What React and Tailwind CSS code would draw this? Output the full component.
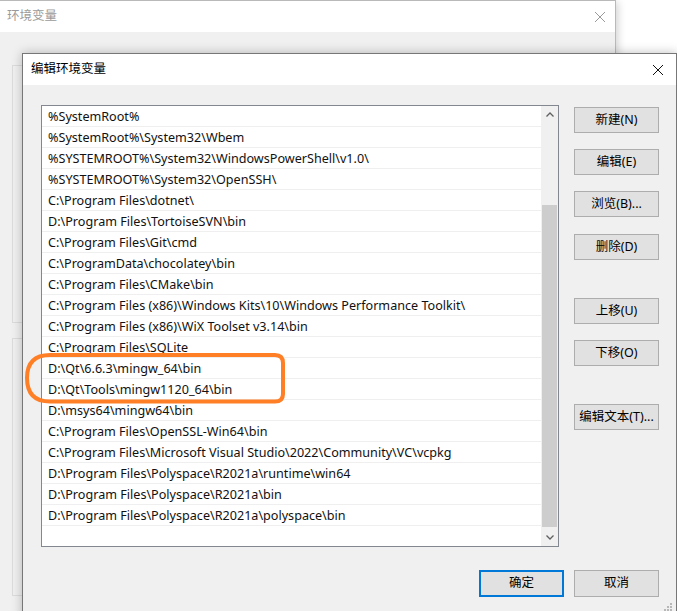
import React from 'react';

const paths = [
  '%SystemRoot%',
  '%SystemRoot%\\System32\\Wbem',
  '%SYSTEMROOT%\\System32\\WindowsPowerShell\\v1.0\\',
  '%SYSTEMROOT%\\System32\\OpenSSH\\',
  'C:\\Program Files\\dotnet\\',
  'D:\\Program Files\\TortoiseSVN\\bin',
  'C:\\Program Files\\Git\\cmd',
  'C:\\ProgramData\\chocolatey\\bin',
  'C:\\Program Files\\CMake\\bin',
  'C:\\Program Files (x86)\\Windows Kits\\10\\Windows Performance Toolkit\\',
  'C:\\Program Files (x86)\\WiX Toolset v3.14\\bin',
  'C:\\Program Files\\SQLite',
  'D:\\Qt\\6.6.3\\mingw_64\\bin',
  'D:\\Qt\\Tools\\mingw1120_64\\bin',
  'D:\\msys64\\mingw64\\bin',
  'C:\\Program Files\\OpenSSL-Win64\\bin',
  'C:\\Program Files\\Microsoft Visual Studio\\2022\\Community\\VC\\vcpkg',
  'D:\\Program Files\\Polyspace\\R2021a\\runtime\\win64',
  'D:\\Program Files\\Polyspace\\R2021a\\bin',
  'D:\\Program Files\\Polyspace\\R2021a\\polyspace\\bin',
];

const CloseIcon = ({ color }) => (
  <svg width="12" height="12" viewBox="0 0 12 12">
    <path d="M1 1 L11 11 M11 1 L1 11" stroke={color} strokeWidth="1" fill="none" />
  </svg>
);

const Btn = ({ children, className = '' }) => (
  <button className={`w-[85px] h-[26px] bg-[#e1e1e1] border border-[#adadad] text-[12.5px] text-black flex items-center justify-center ${className}`}>
    {children}
  </button>
);

const App = () => {
  return (
    <div className="relative w-[677px] h-[611px] overflow-hidden bg-white font-['Noto_Sans','Noto_Sans_CJK_SC',sans-serif] text-[12px] leading-none">
      {/* Background window: 环境变量 */}
      <div className="absolute left-0 top-0 w-[616px] h-[611px] border-t border-r border-[#b9b9b9] bg-[#f0f0f0] shadow-[2px_2px_8px_rgba(0,0,0,0.18)]">
        <div className="h-[31px] bg-white flex items-center justify-between pl-[7px] pr-[9px]">
          <span className="text-[#9a9a9a] text-[12.5px]">环境变量</span>
          <CloseIcon color="#9a9a9a" />
        </div>
        <div className="pl-[12px] pt-[33px] flex flex-col gap-[15px]">
          <div className="h-[258px] border-l border-t border-b border-[#dcdcdc]" />
          <div className="h-[258px] border-l border-t border-b border-[#dcdcdc]" />
        </div>
      </div>

      {/* Dialog: 编辑环境变量 */}
      <div className="absolute left-[22px] top-[53px] w-[655px] h-[580px] border border-[#777777] bg-[#f0f0f0] shadow-[0_0_10px_rgba(0,0,0,0.25)]">
        <div className="h-[31px] bg-white flex items-center justify-between pl-[8px] pr-[12px]">
          <span className="text-black text-[12.5px]">编辑环境变量</span>
          <CloseIcon color="#111" />
        </div>

        <div className="pl-[18px] pr-[17px] pt-[20px]">
          <div className="flex gap-[15px]">
            {/* List box */}
            <div className="relative w-[518px] h-[442px] border border-[#828790] bg-white flex">
              <div className="w-[499px] flex flex-col">
                {paths.map((p) => (
                  <div key={p} className="h-[21px] border-b border-[#efefef] pl-[6px] pt-[2px] flex items-center whitespace-nowrap overflow-hidden text-[12.6px] text-[#111]">
                    {p}
                  </div>
                ))}
              </div>
              {/* Scrollbar */}
              <div className="w-[17px] bg-[#f0f0f0] flex flex-col">
                <div className="h-[17px] flex items-center justify-center">
                  <svg width="8" height="5" viewBox="0 0 8 5">
                    <path d="M0.5 4.5 L4 1 L7.5 4.5" stroke="#606060" strokeWidth="1.3" fill="none" />
                  </svg>
                </div>
                <div className="flex-1 flex flex-col pt-[82px] pb-[2px]">
                  <div className="flex-1 mx-[1px] bg-[#cdcdcd]" />
                </div>
                <div className="h-[17px] flex items-center justify-center">
                  <svg width="8" height="5" viewBox="0 0 8 5">
                    <path d="M0.5 0.5 L4 4 L7.5 0.5" stroke="#606060" strokeWidth="1.3" fill="none" />
                  </svg>
                </div>
              </div>
            </div>

            {/* Side buttons */}
            <div className="flex flex-col pt-[2px]">
              <Btn>新建(N)</Btn>
              <Btn className="mt-[16px]">编辑(E)</Btn>
              <Btn className="mt-[16px]">浏览(B)...</Btn>
              <Btn className="mt-[17px]">删除(D)</Btn>
              <Btn className="mt-[38px]">上移(U)</Btn>
              <Btn className="mt-[16px]">下移(O)</Btn>
              <Btn className="mt-[38px]">编辑文本(T)...</Btn>
            </div>
          </div>

          <div className="flex justify-end gap-[10px] mt-[23px]">
            <button className="w-[85px] h-[27px] bg-[#e1e1e1] border-2 border-[#0078d7] text-[12.5px] text-black flex items-center justify-center">
              确定
            </button>
            <button className="w-[85px] h-[27px] bg-[#e1e1e1] border border-[#adadad] text-[12.5px] text-black flex items-center justify-center">
              取消
            </button>
          </div>
        </div>

        {/* size grip */}
        <svg className="absolute right-[3px] top-[548px]" width="10" height="10" viewBox="0 0 10 10">
          <rect x="7" y="1" width="2" height="2" fill="#b8b8b8" />
          <rect x="4" y="4" width="2" height="2" fill="#b8b8b8" />
          <rect x="7" y="4" width="2" height="2" fill="#b8b8b8" />
          <rect x="1" y="7" width="2" height="2" fill="#b8b8b8" />
          <rect x="4" y="7" width="2" height="2" fill="#b8b8b8" />
          <rect x="7" y="7" width="2" height="2" fill="#b8b8b8" />
        </svg>
      </div>

      {/* Orange highlight drawn over the list */}
      <svg className="absolute left-0 top-0 pointer-events-none" width="677" height="611" viewBox="0 0 677 611">
        <path
          d="M50 355 L275 355 Q283 355 283 363 L283 394 Q283 401.5 275 401.5 L50 401.5 Q27 401.5 27 378 Q27 355 50 355 Z"
          stroke="#ff7f27"
          strokeWidth="4"
          fill="none"
        />
      </svg>
    </div>
  );
};

export default App;
